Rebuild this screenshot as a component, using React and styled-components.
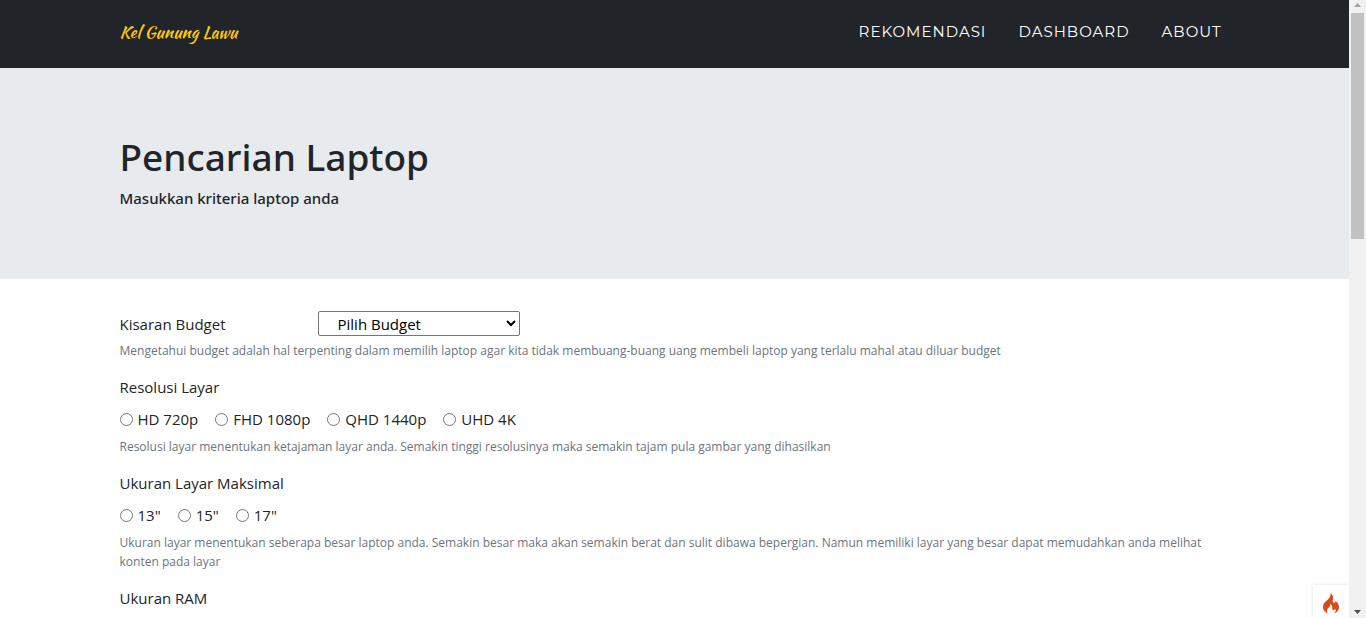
import React from "react";
import styled, { createGlobalStyle } from "styled-components";

const GlobalStyle = createGlobalStyle`
  *, *::before, *::after { box-sizing: border-box; }
  body {
    margin: 0;
    font-family: "Open Sans", "Noto Sans", sans-serif;
    font-size: 15px;
    line-height: 24px;
    color: #212529;
    background: #fff;
  }
`;

const Shell = styled.div`
  display: flex;
  height: 100vh;
  overflow: hidden;
`;

const Page = styled.div`
  position: relative;
  flex: 1;
  min-width: 0;
  overflow: hidden;
`;

const Container = styled.div`
  width: 100%;
  max-width: 1140px;
  margin: 0 auto;
  padding: 0 15px;
`;

const Navbar = styled.nav`
  background: #212529;
`;

const NavInner = styled(Container)`
  display: flex;
  align-items: center;
  justify-content: space-between;
  min-height: 68px;
  padding-bottom: 5px;
`;

const Brand = styled.a`
  font-family: "Kaushan Script", "Liberation Serif", serif;
  font-weight: 400;
  font-size: 17px;
  color: #fec810;
  text-decoration: none;
`;

const NavList = styled.ul`
  display: flex;
  gap: 32px;
  margin: 0;
  padding: 0 8px 0 0;
  list-style: none;
`;

const NavLink = styled.a`
  font-family: Montserrat, Inter, sans-serif;
  font-size: 15px;
  font-weight: 400;
  letter-spacing: 1px;
  text-transform: uppercase;
  text-decoration: none;
  color: #fff;
`;

const Hero = styled.header`
  padding: 65px 0 63px;
  background: #e7ebee;
`;

const Title = styled.h1`
  margin: 0 0 8px;
  font-family: "Noto Sans", "Open Sans", sans-serif;
  font-size: 37px;
  font-weight: 500;
  line-height: 48px;
`;

const Subtitle = styled.h2`
  margin: 0 0 8px;
  font-family: "Noto Sans", "Open Sans", sans-serif;
  font-size: 15px;
  font-weight: 500;
  line-height: 19px;
`;

const Form = styled.form`
  padding-top: 32px;
`;

const Group = styled.fieldset`
  margin: 0 0 15px;
  padding: 0;
  border: 0;
  min-width: 0;
`;

const Legend = styled.legend`
  display: block;
  padding: 0 0 8px;
`;

const FieldRow = styled.div`
  display: flex;
  height: 24px;
`;

const FieldLabel = styled.label`
  width: 198px;
  padding-top: 1px;
`;

const Select = styled.select`
  width: 202px;
  height: 25px;
  padding: 0 0 0 15px;
  border: 1px solid #767676;
  border-radius: 2px;
  background-color: #fff;
  color: #000;
  font: inherit;
`;

const Options = styled.div`
  display: flex;
  gap: 17px;
`;

const Option = styled.label`
  display: flex;
  align-items: center;
  gap: 5px;
`;

const Radio = styled.input`
  width: 13px;
  height: 13px;
  margin: 0;
`;

const Help = styled.small`
  display: block;
  margin-top: 6px;
  font-size: 12px;
  line-height: 19px;
  color: #6c757d;
`;

const DebugButton = styled.button`
  position: absolute;
  right: 0;
  bottom: 0;
  display: flex;
  justify-content: center;
  width: 36px;
  height: 33px;
  padding: 8px 0 0;
  border: 0;
  background: #fff;
  box-shadow: 0 0 4px #dfdfdf;
`;

const Scrollbar = styled.div`
  display: flex;
  flex-direction: column;
  align-items: center;
  width: 17px;
  background: #f1f1f1;
`;

const Thumb = styled.div`
  width: 13px;
  height: 226px;
  background: #c1c1c1;
`;

const Arrow = styled.svg`
  display: block;
  width: 17px;
  height: 13px;
  fill: ${(p) => p.$color};
`;

const Spacer = styled.div`
  flex: 1;
`;

function RadioGroup({ name, title, options = [], help }) {
  return (
    <Group>
      <Legend>{title}</Legend>
      <Options>
        {options.map((o) => (
          <Option key={o}>
            <Radio type="radio" name={name} value={o} />
            {o}
          </Option>
        ))}
      </Options>
      {help && <Help>{help}</Help>}
    </Group>
  );
}

export default function App() {
  return (
    <>
      <GlobalStyle />
      <Shell>
        <Page>
          <Navbar>
            <NavInner>
              <Brand href="#">Kel Gunung Lawu</Brand>
              <NavList>
                {["Rekomendasi", "Dashboard", "About"].map((t) => (
                  <li key={t}>
                    <NavLink href={"#" + t.toLowerCase()}>{t}</NavLink>
                  </li>
                ))}
              </NavList>
            </NavInner>
          </Navbar>
          <Hero>
            <Container>
              <Title>Pencarian Laptop</Title>
              <Subtitle>Masukkan kriteria laptop anda</Subtitle>
            </Container>
          </Hero>
          <Container as="main">
            <Form>
              <Group as="div">
                <FieldRow>
                  <FieldLabel htmlFor="budget">Kisaran Budget</FieldLabel>
                  <Select id="budget" defaultValue="">
                    <option value="">Pilih Budget</option>
                  </Select>
                </FieldRow>
                <Help>
                  Mengetahui budget adalah hal terpenting dalam memilih laptop agar kita tidak
                  membuang-buang uang membeli laptop yang terlalu mahal atau diluar budget
                </Help>
              </Group>
              <RadioGroup
                name="resolusi"
                title="Resolusi Layar"
                options={["HD 720p", "FHD 1080p", "QHD 1440p", "UHD 4K"]}
                help="Resolusi layar menentukan ketajaman layar anda. Semakin tinggi resolusinya maka semakin tajam pula gambar yang dihasilkan"
              />
              <RadioGroup
                name="ukuran"
                title="Ukuran Layar Maksimal"
                options={['13"', '15"', '17"']}
                help="Ukuran layar menentukan seberapa besar laptop anda. Semakin besar maka akan semakin berat dan sulit dibawa bepergian. Namun memiliki layar yang besar dapat memudahkan anda melihat konten pada layar"
              />
              <RadioGroup name="ram" title="Ukuran RAM" />
            </Form>
          </Container>
          <DebugButton type="button" aria-label="Debug">
            <svg width="16" height="21" viewBox="0 0 16 21" fill="#dd4814">
              <path d="M5.2 20.4C2 19.3 0 16.900 0 13.900c0-2.500 1.400-4.100 3.300-5.800C5.500 6.100 8 4.200 7.500 0c2.300 1.800 3.100 4 2.500 6.200-.3 1.400-.5 2.600.5 3.300 1.300.9 2.300-.1 1.800-1.700 2.200 1.700 3.700 3.800 3.700 6.400 0 2.900-1.700 5.200-4.900 6.200 1.700-1.400 2.200-3.200 1-4.700-.4 1.200-1.300 1.600-2.200 1-1.300-1-.2-2.700-1-4.200-.4-.9-1-1.300-1.700-1.500.3 2.100-.6 2.900-1.900 4.100-1.900 1.700-2 3.600-.1 5.300z" />
            </svg>
          </DebugButton>
        </Page>
        <Scrollbar aria-hidden="true">
          <Arrow viewBox="0 0 17 13" $color="#a3a3a3">
            <path d="M5 7h7L8.500 3z" />
          </Arrow>
          <Thumb />
          <Spacer />
          <Arrow viewBox="0 0 17 13" $color="#505050">
            <path d="M5 5h7L8.500 9z" />
          </Arrow>
        </Scrollbar>
      </Shell>
    </>
  );
}
